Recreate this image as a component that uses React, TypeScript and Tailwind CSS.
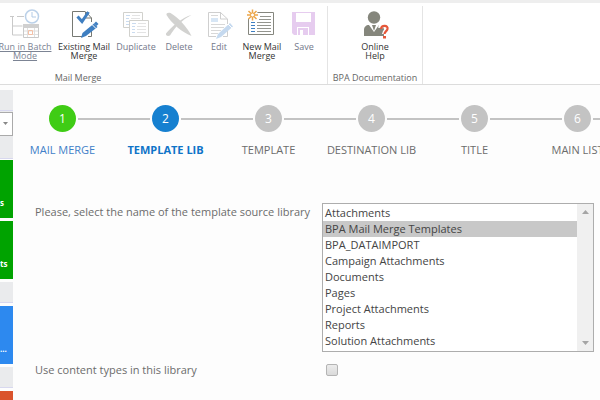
import { useState } from 'react';
import type { ReactNode } from 'react';
import clsx from 'clsx';

const BatchIcon = () => (
  <svg width="32" height="32" viewBox="0 0 32 32" fill="none" className="opacity-45">
    <path d="M1 8.500h4M8 8.500h7M3.500 9v18M3.500 18h10M3.500 27h10" stroke="#8a8a8a" />
    <circle cx="23" cy="8.500" r="6.500" fill="#fff" stroke="#6b9bd0" strokeWidth="1.500" />
    <path d="M23 4v5h4" stroke="#5a8fca" />
    <path d="M14.500 16.500h15v13h-15z" fill="#fff" stroke="#888" />
    <path d="M14 16h16v4h-16z" fill="#999" />
    <path d="M15 23h14M15 26.500h14M18.500 20v9M25.500 20v9" stroke="#bbb" />
    <path d="M19.500 22.500h4v4h-4z" stroke="#e8763c" />
  </svg>
);

const ExistingIcon = () => (
  <svg width="32" height="32" viewBox="0 0 32 32" fill="none">
    <path d="M17 3.500H4.500v25H14M23.500 10v4M23.500 22v6.500H20M17.500 3.500l6 6.500" stroke="#777973" />
    <path d="M17.500 4v6h6" stroke="#777973" />
    <path d="M9.500 8.500l4.500 5L20.500 4" stroke="#3f7fc1" strokeWidth="3" />
    <path d="M13 30l1.500-5L26 15.500l3.500 3.500L18 28z" fill="#3f7fc1" />
    <path d="M24 16.500l4 4" stroke="#fff" />
    <path d="M26 15.500l2-2 2.500 2.500-2 2z" fill="#3f7fc1" />
  </svg>
);

const DuplicateIcon = () => (
  <svg width="32" height="32" viewBox="0 0 32 32" fill="none" className="opacity-40">
    <path d="M3.500 4.500h19v15h-19z" fill="#fff" stroke="#8f8e84" />
    <path d="M6 7.500h4M6 10.500h3M6 13.500h3M6 16.500h3" stroke="#7da6d8" />
    <path d="M12 7.500h8M11 10.500h9" stroke="#bbb" />
    <path d="M9.500 12.500h19v16h-19z" fill="#fff" stroke="#8f8e84" />
    <path d="M12 15.500h4M12 18.500h3M12 21.500h3M12 24.500h3" stroke="#7da6d8" />
    <path d="M18 15.500h8M17 18.500h9M17 21.500h9M17 24.500h9" stroke="#bbb" />
  </svg>
);

const DeleteIcon = () => (
  <svg width="32" height="32" viewBox="0 0 32 32" fill="#d2d2d0">
    <path d="M3.500 7C3 5 5 4.500 7.500 5c8 5 16 13 21 23C20 25 8 15 3.500 7z" />
    <path d="M28.500 7C20 9 8 19 3 25.500c-.5 2 1.500 3 4 2C12 19 19 12 28.500 7z" />
  </svg>
);

const EditIcon = () => (
  <svg width="32" height="32" viewBox="0 0 32 32" fill="none" className="opacity-40">
    <path d="M18 4.500H5.500v24H13M24.500 11v5M24.500 23v5.500H20M17.500 4.500l7 6.500" stroke="#888" />
    <path d="M17.500 5v6h7" stroke="#888" />
    <path d="M8 7.500h7M8 16.500h14M8 19.500h13M8 22.500h10M8 25.500h7" stroke="#a0a0a0" />
    <path d="M8 10h7v4H8z" fill="#9dc3e8" />
    <path d="M13 31l2-5 12-11 3 3.500L18 29z" fill="#6fa3d8" />
    <path d="M25 16l4 4" stroke="#fff" />
  </svg>
);

const NewIcon = () => (
  <svg width="32" height="32" viewBox="0 0 32 32" fill="none">
    <path d="M2.500 4.500h25v22h-25z" fill="#fff" stroke="#85867e" />
    <path d="M5 14.500h4M5 17.500h4M5 20.500h4M5 23.500h4" stroke="#3f7fc1" />
    <path d="M14 8.500h11M13 11.500h12M11 14.500h14M11 17.500h14M11 20.500h14M11 23.500h14" stroke="#94958f" />
    <circle cx="6.500" cy="7" r="5.500" fill="#fff" />
    <path d="M6.500 1.500v11M1 7h11M2.500 3l8 8M10.500 3l-8 8" stroke="#eda74a" strokeWidth="1.500" />
    <circle cx="6.500" cy="7" r="2" fill="#fff" stroke="#eda74a" />
  </svg>
);

const SaveIcon = () => (
  <svg width="32" height="32" viewBox="0 0 32 32">
    <path d="M4 4h23v23H6l-2-2z" fill="#e6ccef" />
    <path d="M8 5h15v9H8zM9 19h12v8H9z" fill="#fff" />
    <path d="M10 20h10v7h-5v-5h-3v5h-2z" fill="#e6ccef" />
  </svg>
);

const HelpIcon = () => (
  <svg width="32" height="32" viewBox="0 0 32 32">
    <circle cx="15" cy="9.500" r="6.200" fill="#85867c" />
    <path d="M5 28v-6c0-3 2-5 5-5l5 7 5-7c3 0 5 2 5 5v6z" fill="#85867c" />
    <path d="M13 17h4l-1 3-1 3-1-3z" fill="#85867c" />
    <path d="M21.500 20c.5-5 8.500-4.500 7.500.5-.5 2.500-3.500 2.500-3.500 5.500" fill="none" stroke="#fff" strokeWidth="5" />
    <path d="M22 21c.5-4.500 7.500-4 6.500 0-.5 2.500-3 2.500-3 5" fill="none" stroke="#e5573a" strokeWidth="2.200" />
    <path d="M24 28h3v2.500h-3z" fill="#e5573a" />
  </svg>
);

type Action = { label: ReactNode; icon: ReactNode; width: string; tone: string };

const actions: Action[] = [
  { label: <>Run in Batch<br />Mode</>, icon: <BatchIcon />, width: 'w-[50px]', tone: 'text-[#7c8494] underline' },
  { label: <>Existing Mail<br />Merge</>, icon: <ExistingIcon />, width: 'w-[68px]', tone: 'text-[#333]' },
  { label: 'Duplicate', icon: <DuplicateIcon />, width: 'w-[36px]', tone: 'text-[#73788a]' },
  { label: 'Delete', icon: <DeleteIcon />, width: 'w-[50px]', tone: 'text-[#73788a]' },
  { label: 'Edit', icon: <EditIcon />, width: 'w-[30px]', tone: 'text-[#73788a]' },
  { label: <>New Mail<br />Merge</>, icon: <NewIcon />, width: 'w-[56px]', tone: 'text-[#333]' },
  { label: 'Save', icon: <SaveIcon />, width: 'w-[28px]', tone: 'text-[#73788a]' },
];

const steps = ['MAIL MERGE', 'TEMPLATE LIB', 'TEMPLATE', 'DESTINATION LIB', 'TITLE', 'MAIN LIST'];

const libraries = [
  'Attachments',
  'BPA Mail Merge Templates',
  'BPA_DATAIMPORT',
  'Campaign Attachments',
  'Documents',
  'Pages',
  'Project Attachments',
  'Reports',
  'Solution Attachments',
];

function RibbonButton({ label, icon, width, tone }: Action) {
  return (
    <button
      type="button"
      className={clsx('flex shrink-0 flex-col items-center gap-[2px] whitespace-nowrap text-[9px] leading-[9px]', width, tone)}
    >
      {icon}
      <span>{label}</span>
    </button>
  );
}

function Ribbon() {
  return (
    <header className="flex border-t-[3px] border-b border-t-[#eeeeee] border-b-[#dcdcdc] bg-white pt-[3px]">
      <section className="flex w-[328px] shrink-0 flex-col border-r border-[#e4e4e4] pt-[2px]">
        <div className="flex h-[63px] items-start">
          {actions.map((action, i) => (
            <RibbonButton key={i} {...action} />
          ))}
        </div>
        <h2 className="w-[156px] text-center text-[9px] leading-[13px] text-[#666]">Mail Merge</h2>
      </section>
      <section className="flex w-[95px] shrink-0 flex-col items-center border-r border-[#e4e4e4] pt-[2px]">
        <div className="flex h-[63px] items-start">
          <RibbonButton label={<>Online<br />Help</>} icon={<HelpIcon />} width="w-[60px]" tone="text-[#333]" />
        </div>
        <h2 className="whitespace-nowrap text-[9px] leading-[13px] text-[#666]">BPA Documentation</h2>
      </section>
    </header>
  );
}

function Tile({ text, color }: { text: string; color: string }) {
  return (
    <a href="#" className={clsx('flex h-[58px] shrink-0 items-end overflow-hidden pb-[8px] text-[8px] font-bold leading-[14px] text-white', color)}>
      {text}
    </a>
  );
}

function Sidebar() {
  return (
    <nav className="flex w-[13px] shrink-0 flex-col gap-[3px] overflow-hidden pt-[5px]">
      <div className="-mb-[2px] shrink-0">
        <div className="h-[21px] border-b border-[#d8d8ef] bg-[#eaebed]" />
        <div className="h-[48px] border-b border-[#d8d8ef] bg-[#eaebed] pt-px">
          <div className="relative h-6">
            <select aria-label="View" className="block h-6 w-full appearance-none border border-l-0 border-[#aaa] bg-white" />
            <svg className="pointer-events-none absolute right-[5px] top-[10px]" width="5" height="4" viewBox="0 0 5 4">
              <path d="M0 0h5L2.500 3z" fill="#888" />
            </svg>
          </div>
        </div>
      </div>
      <Tile text="s" color="bg-[#00a300]" />
      <Tile text="ts" color="bg-[#00a300]" />
      <div className="h-[21px] shrink-0 border-b border-[#d8d8ef] bg-[#eaebed]" />
      <Tile text="..." color="bg-[#2d89ef]" />
      <div className="h-[21px] shrink-0 border-b border-[#d8d8ef] bg-[#eaebed]" />
      <Tile text="" color="bg-[#da532c]" />
    </nav>
  );
}

function Stepper({ current }: { current: number }) {
  return (
    <ol className="-ml-[2px] flex">
      {steps.map((step, i) => (
        <li key={step} className="flex w-[103px] shrink-0 flex-col items-center gap-[10px]">
          <div className="flex w-full items-center gap-[2px]">
            <span className={clsx('h-[2px] flex-1', i > 0 && 'bg-[#c3c3c3]')} />
            <span
              className={clsx(
                'flex size-[27px] items-center justify-center rounded-full text-[12px] text-white',
                i < current && 'bg-[#3fcc15]',
                i === current && 'bg-[#1680d0]',
                i > current && 'bg-[#c3c3c3]',
              )}
            >
              {i + 1}
            </span>
            <span className="h-[2px] flex-1 bg-[#c3c3c3]" />
          </div>
          <span
            className={clsx(
              'whitespace-nowrap text-[11px] leading-4',
              i < current && 'text-[#3f7fc8]',
              i === current && 'font-bold text-[#0f74c8]',
              i > current && 'text-[#6c6c6c]',
            )}
          >
            {step}
          </span>
        </li>
      ))}
    </ol>
  );
}

function LibraryForm() {
  const [library, setLibrary] = useState(['BPA Mail Merge Templates']);

  return (
    <form className="mt-[45px] grid grid-cols-[287px_1fr] gap-y-[10px] pl-[22px] pr-[6px] text-[11px] leading-4 text-[#6c6c6c]">
      <label htmlFor="library" className="pt-px">
        Please, select the name of the template source library
      </label>
      <div className="flex h-[149px] border border-[#adadad] bg-white">
        <select
          id="library"
          multiple
          size={9}
          value={library}
          onChange={(e) => setLibrary([e.target.value])}
          className="h-full min-w-0 flex-1 overflow-hidden bg-white pt-px text-[11px] leading-4 text-[#444] outline-none"
        >
          {libraries.map((name) => (
            <option key={name} className="h-4 px-[2px] py-0 leading-4 checked:bg-[#c8c8c8] checked:text-[#444]">
              {name}
            </option>
          ))}
        </select>
        <div className="flex w-[16px] flex-col items-center justify-between bg-[#f0f0f0] py-[6px]">
          <svg width="7" height="4" viewBox="0 0 7 4"><path d="M0 4h7L3.500 0z" fill="#a5a5a5" /></svg>
          <svg width="7" height="4" viewBox="0 0 7 4"><path d="M0 0h7L3.500 4z" fill="#a5a5a5" /></svg>
        </div>
      </div>
      <label htmlFor="content-types">Use content types in this library</label>
      <input
        id="content-types"
        type="checkbox"
        className="ml-1 mt-[2px] size-[12px] appearance-none rounded-[2px] border border-[#b4b4b4] bg-linear-to-b from-[#ececec] to-[#dadada] checked:bg-[#1680d0]"
      />
    </form>
  );
}

export default function App() {
  return (
    <div className="flex h-screen flex-col overflow-hidden bg-[#fdfdfd] font-['Open_Sans','Noto_Sans',sans-serif]">
      <Ribbon />
      <div className="flex min-h-0 flex-1">
        <Sidebar />
        <main className="min-w-0 flex-1 overflow-hidden">
          <div className="pt-5">
            <Stepper current={1} />
            <LibraryForm />
          </div>
        </main>
      </div>
    </div>
  );
}
